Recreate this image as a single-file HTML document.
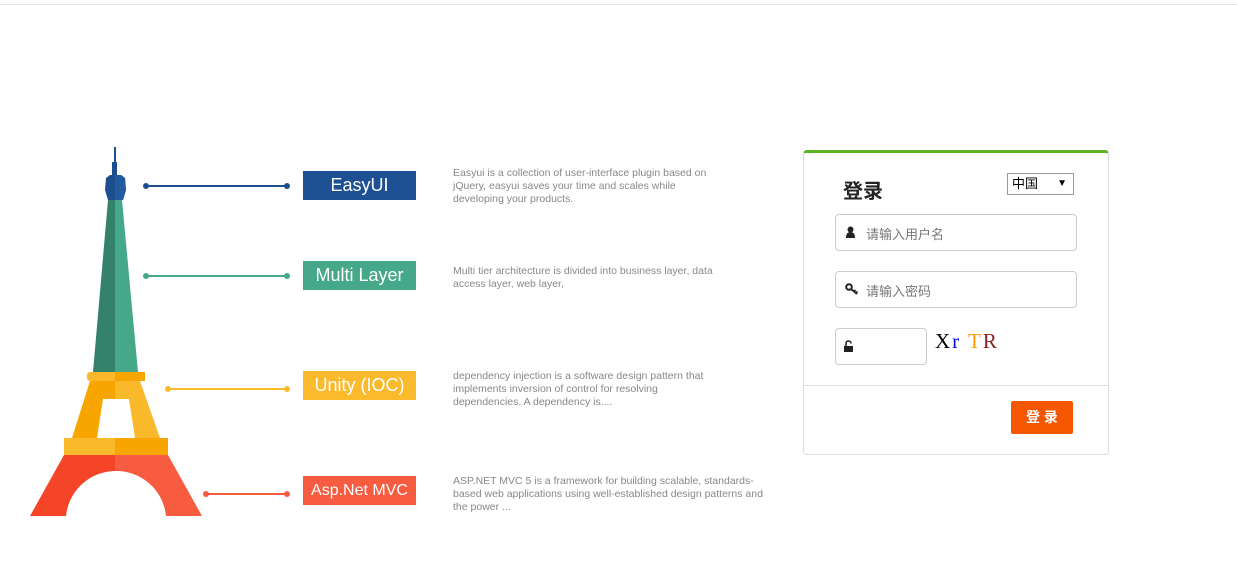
<!DOCTYPE html>
<html><head><meta charset="utf-8"><style>
body{margin:0;width:1237px;height:562px;background:#fff;position:relative;overflow:hidden;font-family:"Liberation Sans","Noto Sans CJK SC",sans-serif}
.a{position:absolute}
.lbl{position:absolute;left:303px;width:113px;height:29px;color:#fff;font-size:18px;line-height:29px;text-align:center}
.ln{position:absolute;height:2px}
.dot{position:absolute;width:6px;height:6px;border-radius:50%;top:-2px}
.desc{position:absolute;left:453px;font-size:10.5px;line-height:13px;color:#888;width:320px}
.inp{position:absolute;border:1px solid #ccc;border-radius:4px;background:#fff;font-size:13px;color:#777;box-sizing:border-box}
</style></head><body>
<div class="a" style="left:0;top:4px;width:1237px;height:1px;background:#e6e6e6"></div>
<svg class="a" style="left:0;top:0" width="240" height="562">
<rect x="114" y="147" width="2" height="20" fill="#1c4f8f"/>
<rect x="112" y="162" width="5" height="14" fill="#1c4f8f"/>
<path d="M106 178 L110 175 L121 175 L125 178 L126 190 L123 200 L108 200 L105 190Z" fill="#1d4f8f"/>
<path d="M115 175 L121 175 L125 178 L126 190 L123 200 L115 200Z" fill="#245aa0"/>
<path d="M108 200 L115 200 L115 372 L93 372Z" fill="#35826c"/>
<path d="M115 200 L122 200 L138 372 L115 372Z" fill="#45a888"/>
<rect x="87" y="372" width="58" height="9" rx="3" fill="#fab92a"/>
<rect x="115" y="372" width="30" height="9" fill="#f8a500"/>
<path d="M90 381 L115 381 L115 399 L103 399 L97 438 L72 438Z" fill="#f8a500"/>
<path d="M115 381 L140 381 L160 438 L135 438 L129 399 L115 399Z" fill="#fab92a"/>
<rect x="64" y="438" width="51" height="17" fill="#fab92a"/>
<rect x="115" y="438" width="53" height="17" fill="#f8a500"/>
<path d="M64 455 L115 455 L115 471 A50 50 0 0 0 66 516 L30 516Z" fill="#f54528"/>
<path d="M115 455 L168 455 L202 516 L166 516 A50 50 0 0 0 115 471Z" fill="#f75b40"/>
</svg>
<div class="ln" style="left:146px;top:185px;width:141px;background:#1d4f8f"><div class="dot" style="left:-3px;background:#1d4f8f"></div><div class="dot" style="right:-3px;background:#1d4f8f"></div></div>
<div class="lbl" style="top:171px;background:#1d5193">EasyUI</div>
<div class="ln" style="left:146px;top:275px;width:141px;background:#45a888"><div class="dot" style="left:-3px;background:#45a888"></div><div class="dot" style="right:-3px;background:#45a888"></div></div>
<div class="lbl" style="top:261px;background:#45a888">Multi Layer</div>
<div class="ln" style="left:168px;top:388px;width:119px;background:#fbbb2d"><div class="dot" style="left:-3px;background:#fbbb2d"></div><div class="dot" style="right:-3px;background:#fbbb2d"></div></div>
<div class="lbl" style="top:371px;background:#fbb92c">Unity (IOC)</div>
<div class="ln" style="left:206px;top:493px;width:81px;background:#f75b40"><div class="dot" style="left:-3px;background:#f75b40"></div><div class="dot" style="right:-3px;background:#f75b40"></div></div>
<div class="lbl" style="top:476px;background:#f75b40;font-size:16px">Asp.Net MVC</div>
<div class="desc" style="top:167px;width:270px">Easyui is a collection of user-interface plugin based on jQuery, easyui saves your time and scales while developing your products.</div>
<div class="desc" style="top:265px;width:275px">Multi tier architecture is divided into business layer, data access layer, web layer,</div>
<div class="desc" style="top:370px;width:265px">dependency injection is a software design pattern that implements inversion of control for resolving dependencies. A dependency is....</div>
<div class="desc" style="top:475px">ASP.NET MVC 5 is a framework for building scalable, standards-based web applications using well-established design patterns and the power ...</div>

<div class="a" style="left:803px;top:150px;width:304px;height:301px;border:1px solid #ddd;border-top:3px solid #5db323;border-radius:4px"></div>
<div class="a" style="left:843px;top:175px;font-size:20px;font-weight:bold;color:#222">登录</div>
<div class="a" style="left:1007px;top:173px;width:67px;height:22px;border:1px solid #999;box-sizing:border-box;font-size:13px;line-height:20px;padding-left:4px">中国<span style="position:absolute;right:6px;font-size:10px">▼</span></div>
<div class="inp" style="left:835px;top:214px;width:242px;height:37px;padding:9px 0 0 30px">请输入用户名</div>
<svg class="a" style="left:845px;top:226px" width="11" height="12"><circle cx="5.5" cy="3.5" r="3" fill="#222"/><path d="M1 12 Q1 6 5.5 6 Q10 6 10 12Z" fill="#222"/></svg>
<div class="inp" style="left:835px;top:271px;width:242px;height:37px;padding:9px 0 0 30px">请输入密码</div>
<svg class="a" style="left:845px;top:283px" width="14" height="12"><circle cx="4" cy="4" r="2.8" fill="none" stroke="#222" stroke-width="2"/><path d="M6 6 L12 11 M9 8.5 L10.5 7 M11 10 L12.5 8.5" stroke="#222" stroke-width="1.8"/></svg>
<div class="inp" style="left:835px;top:328px;width:92px;height:37px"></div>
<svg class="a" style="left:844px;top:340px" width="10" height="12"><path d="M2 6 V3.5 A2.5 2.5 0 0 1 7 3.5" fill="none" stroke="#222" stroke-width="1.6"/><rect x="0" y="6" width="9" height="6" fill="#222"/></svg>
<div class="a" style="left:935px;top:329px;font-family:'Liberation Serif',serif;font-size:21px;letter-spacing:2px"><span style="color:#000">X</span><span style="color:#00f">r</span> <span style="color:#f90">T</span><span style="color:#822">R</span></div>
<div class="a" style="left:804px;top:385px;width:304px;height:1px;background:#ddd"></div>
<div class="a" style="left:1011px;top:401px;width:62px;height:33px;background:#f55600;border-radius:2px;color:#fff;font-size:14px;font-weight:bold;line-height:33px;text-align:center">登 录</div>
</body></html>
